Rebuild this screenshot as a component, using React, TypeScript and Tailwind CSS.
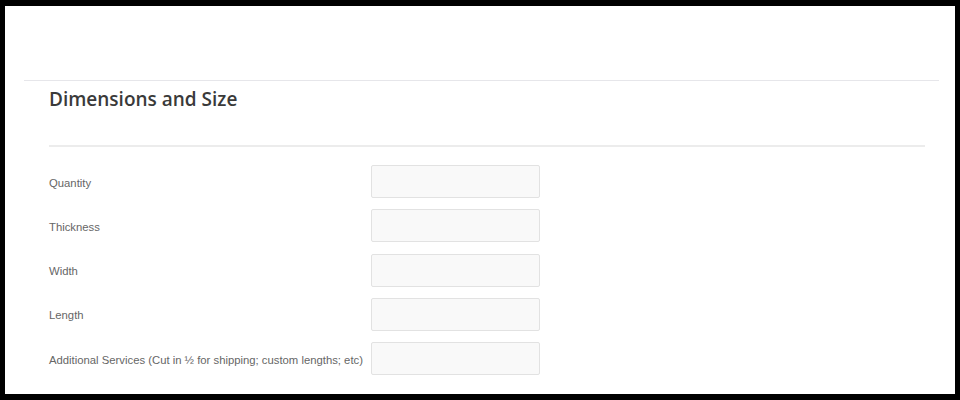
import React from "react";

const rows = [
  "Quantity",
  "Thickness",
  "Width",
  "Length",
  "Additional Services (Cut in ½ for shipping; custom lengths; etc)",
];

export default function App() {
  return (
    <div className="w-[960px] h-[400px] bg-black pt-[6px] pl-[5px] pr-[5px] pb-[6px]">
      <div className="h-full bg-white pt-[74px] pl-[19px] pr-[16px] overflow-hidden">
        <div className="border-t border-[#e6e6ea]">
          <div className="pl-[25px] pr-[14px]">
            <h2 className="pt-[5px] text-[19px] leading-[26px] font-semibold text-[#3a3a3a] [font-family:'Open_Sans',sans-serif]">
              Dimensions and Size
            </h2>
            <div className="mt-[33px] h-[2px] bg-[#ececec]" />
            <div className="mt-[18px] flex flex-col gap-[11.25px]">
              {rows.map((label) => (
                <div key={label} className="flex items-center">
                  <label className="w-[322px] pt-[3px] text-[11.3px] text-[#666666] [font-family:'Liberation_Sans',Arial,sans-serif]">
                    {label}
                  </label>
                  <input
                    type="text"
                    className="w-[169px] h-[33px] bg-[#f9f9f9] border border-[#e2e2e2] rounded-[2px] outline-none"
                  />
                </div>
              ))}
            </div>
          </div>
        </div>
      </div>
    </div>
  );
}
